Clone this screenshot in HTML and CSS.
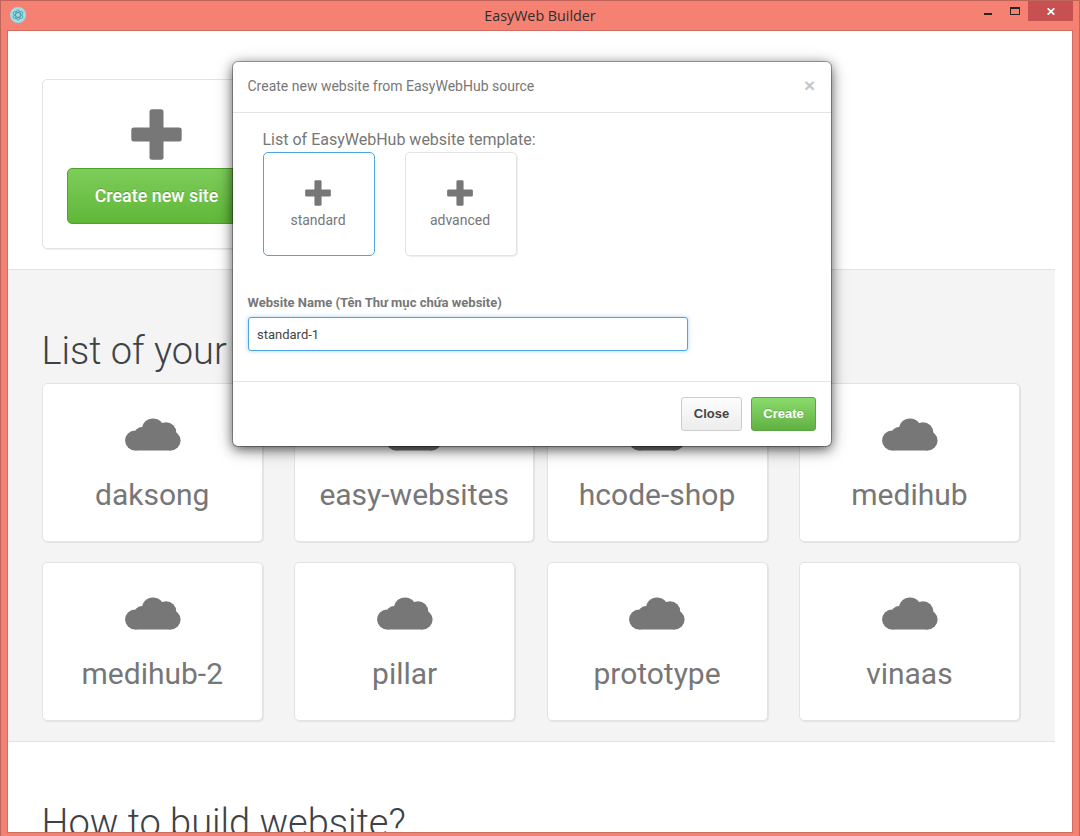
FILE: index.html
```html
<!DOCTYPE html>
<html lang="vi">
<head>
<meta charset="utf-8">
<title>EasyWeb Builder</title>
<link rel="stylesheet" href="styles.css">
</head>
<body>
<svg class="defs" width="0" height="0" aria-hidden="true">
  <symbol id="cloud" viewBox="0 0 56 33">
    <circle cx="10" cy="22.5" r="9.9"/><circle cx="17" cy="16.7" r="7.6"/><circle cx="28" cy="11.4" r="11"/><circle cx="41" cy="14.6" r="10.3"/><circle cx="45.8" cy="22.6" r="9.8"/><path d="M10 15h36v17.4H10z"/>
  </symbol>
  <symbol id="plus" viewBox="0 0 51 51">
    <rect x="18.5" y="0.3" width="14" height="50.4" rx="2.5"/><rect x="0.3" y="18.5" width="50.4" height="14" rx="2.5"/>
  </symbol>
</svg>
<div class="window">
  <header class="titlebar">
    <svg class="app-icon" width="16" height="16" viewBox="0 0 16 16">
      <circle cx="8" cy="8" r="8" fill="#9adfe9"/>
      <g fill="none" stroke="#3f7d88" stroke-width=".6"><ellipse cx="8" cy="8" rx="5.4" ry="2.3" transform="rotate(30 8 8)"/><ellipse cx="8" cy="8" rx="5.4" ry="2.3" transform="rotate(-30 8 8)"/><ellipse cx="8" cy="8" rx="2.3" ry="5"/></g>
    </svg>
    <h1 class="window-title">EasyWeb Builder</h1>
    <div class="controls">
      <svg class="ctl" width="8" height="2"><path fill="#252525" d="M0 0h8v2H0z"/></svg>
      <svg class="ctl-max" width="10" height="8"><path fill="#252525" fill-rule="evenodd" d="M0 0h10v8H0zM1 2v5h8V2z"/></svg>
      <span class="ctl-close"><svg width="8" height="7" viewBox="0 0 8 7"><path d="M.7 .3l6.6 6.4M7.3 .3L.7 6.7" stroke="#fff" stroke-width="1.7"/></svg></span>
    </div>
  </header>
  <main class="page">
    <section class="create">
      <div class="card create-card">
        <svg class="plus-lg"><use href="#plus"/></svg>
        <button class="create-btn">Create new site</button>
      </div>
    </section>
    <section class="sites">
      <h2 class="heading">List of your websites</h2>
      <div class="grid">
        <div class="card site"><svg class="cloud"><use href="#cloud"/></svg><span>daksong</span></div>
        <div class="card site"><svg class="cloud"><use href="#cloud"/></svg><span>easy-websites</span></div>
        <div class="card site"><svg class="cloud"><use href="#cloud"/></svg><span>hcode-shop</span></div>
        <div class="card site"><svg class="cloud"><use href="#cloud"/></svg><span>medihub</span></div>
        <div class="card site"><svg class="cloud"><use href="#cloud"/></svg><span>medihub-2</span></div>
        <div class="card site"><svg class="cloud"><use href="#cloud"/></svg><span>pillar</span></div>
        <div class="card site"><svg class="cloud"><use href="#cloud"/></svg><span>prototype</span></div>
        <div class="card site"><svg class="cloud"><use href="#cloud"/></svg><span>vinaas</span></div>
      </div>
    </section>
    <section class="howto">
      <h2 class="heading">How to build website?</h2>
    </section>
  </main>
  <div class="modal">
    <div class="modal-header"><span>Create new website from EasyWebHub source</span><span class="dismiss">×</span></div>
    <div class="modal-body">
      <div class="templates-title">List of EasyWebHub website template:</div>
      <div class="templates">
        <div class="card template selected"><svg class="plus-sm"><use href="#plus"/></svg><span>standard</span></div>
        <div class="card template"><svg class="plus-sm"><use href="#plus"/></svg><span>advanced</span></div>
      </div>
      <label class="label" for="site-name">Website Name (Tên Thư mục chứa website)</label>
      <input class="input" id="site-name" type="text" value="standard-1">
    </div>
    <div class="modal-footer"><button class="btn">Close</button><button class="btn btn-create">Create</button></div>
  </div>
</div>
</body>
</html>
```
FILE: styles.css
```css
* { box-sizing: border-box; }
body { margin: 0; font-family: Roboto, "Liberation Sans", sans-serif; color: #777; }
h1, h2 { margin: 0; }
.defs { position: absolute; }
svg { display: block; fill: #777; }

.window {
  position: relative;
  display: flex;
  flex-direction: column;
  width: 1080px;
  height: 836px;
  padding: 0 6px 3px;
  background: #f58173;
  border: 1px solid #c0655b;
  border-bottom: 0;
  overflow: hidden;
}
.titlebar { display: grid; grid-template-columns: 1fr auto 1fr; height: 29px; flex: none; }
.app-icon { margin: 6px 0 0 3px; }
.window-title { font: 400 14.3px/29px "Open Sans", sans-serif; color: #2d2d2d; white-space: nowrap; }
.controls { display: flex; justify-content: flex-end; }
.ctl { margin: 12px 18px 0 0; }
.ctl-max { margin: 6px 8px 0 0; }
.ctl-close { display: flex; align-items: center; justify-content: center; width: 45px; height: 20px; background: #c75050; }

.page { flex: 1; min-height: 0; background: #fff; border: 1px solid #d06e62; overflow: hidden; }
.create { height: 238px; padding: 48px 34px 0; }
.card { background: #fff; border: 1px solid #e3e3e3; border-radius: 5px; box-shadow: 1px 1px 1px rgba(0,0,0,.07); }
.create-card { display: flex; flex-direction: column; align-items: center; width: 228px; height: 170px; padding-top: 28.5px; }
.plus-lg { width: 51px; height: 51px; }
.create-btn {
  width: 179px;
  height: 56px;
  margin-top: 8.5px;
  padding: 0 0 2px 1px;
  border: 1px solid #50a032;
  border-radius: 5px;
  background: linear-gradient(#7dcd5a, #5fb738);
  font: 500 17.9px Roboto, sans-serif;
  color: #fff;
  text-shadow: 0 -1px 0 rgba(0,0,0,.2);
}
.sites { width: 1047px; height: 473px; padding: 60px 34px 0; background: #f4f4f4; border: solid #e3e3e3; border-width: 1px 0; }
.heading { margin-left: -.5px; font-size: 38px; font-weight: 300; line-height: 43px; color: #3d4247; white-space: nowrap; }
.grid { display: grid; grid-template-columns: repeat(4, 252.4px); row-gap: 20px; margin-top: 10px; }
.site { display: flex; flex-direction: column; align-items: center; justify-self: start; min-width: 221px; height: 159px; padding: 34px 24px 0; font-size: 30px; line-height: 40px; }
.site span { margin: 24px .5px 0 0; }
.cloud { width: 56px; height: 33px; }
.howto { padding: 60px 34px 0; }

.modal { position: absolute; left: 232px; top: 61px; width: 598px; height: 384px; background: #fff; border-radius: 5px; box-shadow: 0 0 0 1px rgba(0,0,0,.3), 0 3px 12px rgba(0,0,0,.6), 0 4px 20px rgba(0,0,0,.22); }
.modal-header { display: flex; justify-content: space-between; height: 51px; padding: 0 16px 0 14.5px; border-bottom: 1px solid #e3e3e3; font-size: 14px; line-height: 49px; }
.dismiss { font: 700 19px/47px "Liberation Sans", sans-serif; color: #c6c6c6; }
.modal-body { height: 268px; padding: 16px 15px 0; }
.templates-title { padding-left: 14.5px; font-size: 16px; line-height: 22px; }
.templates { display: flex; gap: 30px; margin-top: 1px; padding-left: 15px; }
.template { display: flex; flex-direction: column; align-items: center; width: 112px; height: 104px; padding: 26.5px 2px 0 0; font-size: 14px; line-height: 20px; }
.template span { margin-top: 4.5px; }
.selected { border-color: #4fa5e3; box-shadow: none; }
.plus-sm { width: 26px; height: 26px; }
.label { display: block; margin: 37px 0 0 -.5px; font-size: 13px; font-weight: 700; line-height: 20px; }
.input { display: block; width: 440px; height: 34px; margin-top: 4px; padding: 1px 8px 0; border: 1px solid #4fa5e3; border-radius: 3px; outline: 0; box-shadow: 0 0 4px rgba(79,165,227,.5); font: 13px Roboto, sans-serif; color: #444; }
.modal-footer { display: flex; justify-content: flex-end; gap: 9px; height: 65px; padding: 15px 15px 0; border-top: 1px solid #e3e3e3; }
.btn { width: 61px; height: 34px; padding: 0 0 2px; border: 1px solid #ccc; border-radius: 3px; background: linear-gradient(#fdfdfd, #ededed); font: 700 13px "Liberation Sans", Arial, sans-serif; color: #444; }
.btn-create { width: 65px; border-color: #57a83a; background: linear-gradient(#8bdb6c, #61b044); color: #fff; text-shadow: 0 -1px 0 rgba(0,0,0,.15); }
```
